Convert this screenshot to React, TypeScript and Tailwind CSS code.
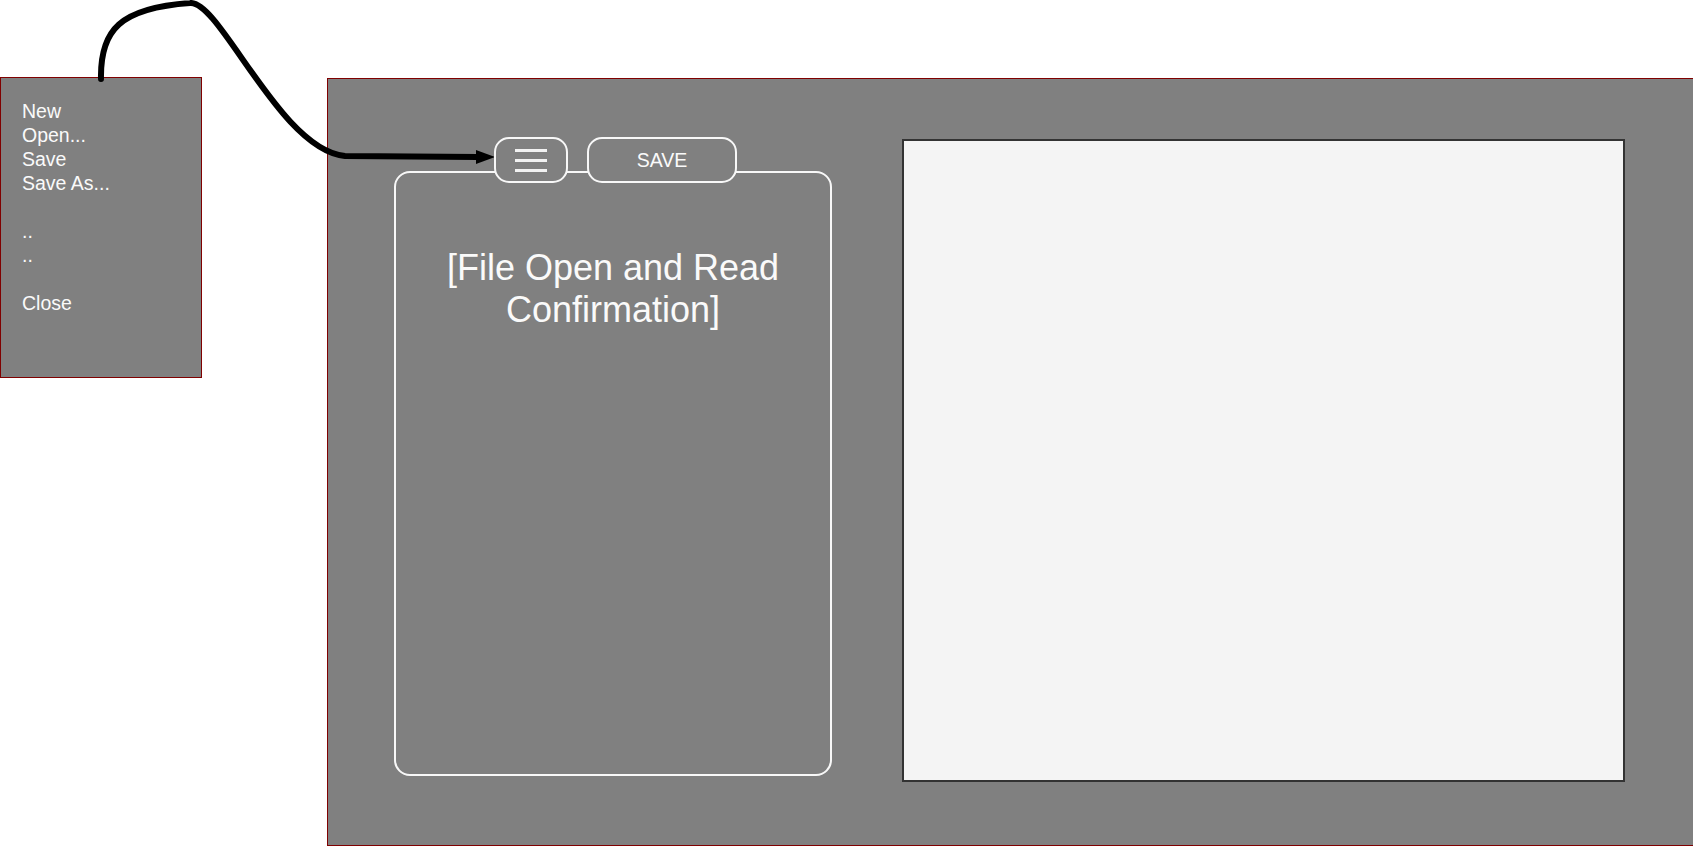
import React from 'react';

const menuItems = ['New', 'Open...', 'Save', 'Save As...', '', '..', '..', '', 'Close'];

export default function App() {
  return (
    <div className="relative w-[1693px] h-[846px] overflow-hidden bg-white flex items-start font-['Liberation_Sans',Arial,sans-serif]">
      {/* file menu */}
      <div className="shrink-0 mt-[77px] w-[202px] h-[301px] border border-[#800000] bg-[#808080] pl-[21px] pt-[21px] text-[19.5px] leading-[24px] text-[#fafafa]">
        {menuItems.map((item, idx) => (
          <div key={idx} className="h-[24px]">
            {item}
          </div>
        ))}
      </div>

      {/* main window */}
      <div className="shrink-0 ml-[125px] mt-[78px] w-[1400px] h-[768px] border-t border-l border-b border-[#800000] bg-[#808080] flex items-start pl-[66px] pt-[58px]">
        <div className="w-[438px] flex flex-col">
          <div className="relative z-10 flex h-[46px] pl-[100px] gap-[19px]">
            <div className="w-[74px] h-[46px] rounded-[15px] border-2 border-[#f8f8f8] bg-[#808080] flex flex-col items-center justify-center gap-[7px]">
              <div className="w-[32px] h-[3px] bg-[#f2f2f2]" />
              <div className="w-[32px] h-[3px] bg-[#f2f2f2]" />
              <div className="w-[32px] h-[3px] bg-[#f2f2f2]" />
            </div>
            <div className="w-[150px] h-[46px] rounded-[15px] border-2 border-[#f8f8f8] bg-[#808080] flex items-center justify-center pt-[2px] text-[19.5px] text-[#fafafa]">
              SAVE
            </div>
          </div>
          <div className="-mt-[12px] h-[605px] rounded-[16px] border-2 border-[#f8f8f8] pt-[74px] text-center text-[36px] leading-[42px] text-[#fafafa]">
            [File Open and Read
            <br />
            Confirmation]
          </div>
        </div>

        <div className="ml-[70px] mt-[2px] w-[723px] h-[643px] border-2 border-[#333333] bg-[#f4f4f4]" />
      </div>

      {/* connector */}
      <svg className="absolute inset-0 pointer-events-none" width="1693" height="846">
        <path
          d="M101,79 C100,30 120,8 190,3 C220,0 280,150 345,156 L478,157"
          fill="none"
          stroke="#000"
          strokeWidth="6"
          strokeLinecap="round"
        />
        <polygon points="476,150 495,157 476,164" fill="#000" />
      </svg>
    </div>
  );
}
